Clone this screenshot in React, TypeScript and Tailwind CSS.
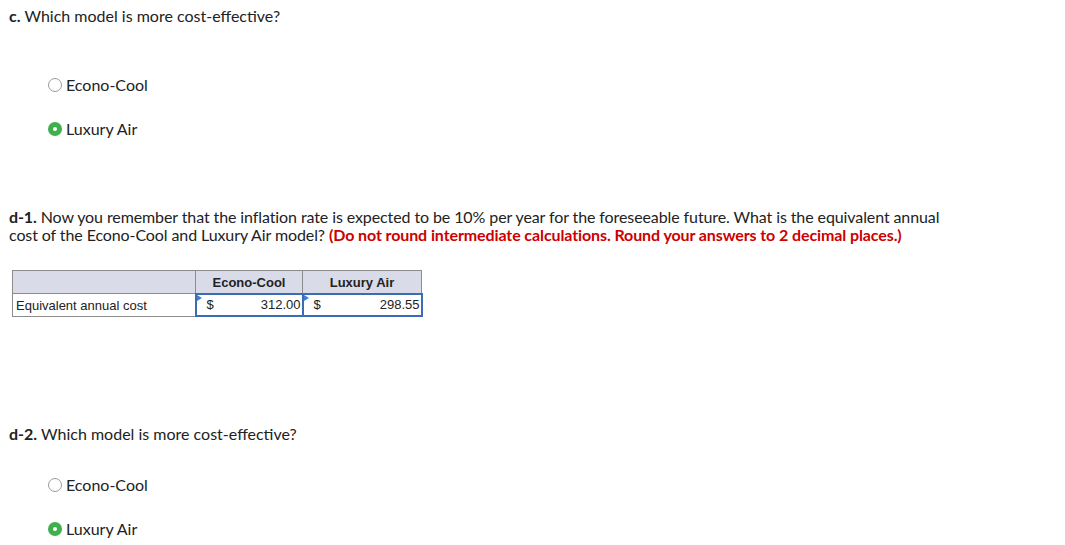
import React from "react";

function Radio({ label, checked }: { label: string; checked?: boolean }) {
  return (
    <div className="flex items-center h-[20px]">
      {checked ? (
        <span className="w-[14px] h-[14px] rounded-full bg-[#3fb04b] flex items-center justify-center">
          <span className="w-[4px] h-[4px] rounded-full bg-white" />
        </span>
      ) : (
        <span className="w-[14px] h-[14px] rounded-full border border-[#9a9a9a] bg-white" />
      )}
      <span className="ml-[4px]">{label}</span>
    </div>
  );
}

function MoneyCell({ value }: { value: string }) {
  return (
    <td className="relative border-2 border-[#3a6db5] h-[22px] p-0">
      <span className="absolute left-0 top-0 w-0 h-0 border-l-[5px] border-y-[3px] border-l-[#3a7fd8] border-y-transparent" />
      <div className="flex justify-between pl-[10px] pr-[1px]">
        <span>$</span>
        <span>{value}</span>
      </div>
    </td>
  );
}

export default function App() {
  return (
    <div className="w-[1065px] h-[545px] bg-white text-[#222] text-[16px] font-['Lato','Open_Sans',sans-serif] px-[9px] pt-[7px]">
      <p className="leading-[18px]">
        <b>c.</b> Which model is more cost-effective?
      </p>
      <div className="pl-[39px] mt-[50px] flex flex-col gap-[24px]">
        <Radio label="Econo-Cool" />
        <Radio label="Luxury Air" checked />
      </div>

      <p className="leading-[18px] mt-[69px] whitespace-nowrap tracking-[-0.1px]">
        <b>d-1.</b> Now you remember that the inflation rate is expected to be 10% per year for the foreseeable
        future. What is the equivalent annual
        <br />
        cost of the Econo-Cool and Luxury Air model?{" "}
        <b className="text-[#c00]">(Do not round intermediate calculations. Round your answers to 2 decimal places.)</b>
      </p>

      <table className="mt-[26px] ml-[3px] border-collapse font-['Liberation_Sans',Arial,sans-serif] text-[13px] text-[#222]">
        <thead>
          <tr className="bg-[#d9dce8] h-[23px]">
            <th className="w-[183px] border border-[#8c8c8c]" />
            <th className="w-[107px] border border-[#8c8c8c] font-bold pt-[2px]">Econo-Cool</th>
            <th className="w-[119px] border border-[#8c8c8c] font-bold pt-[2px]">Luxury Air</th>
          </tr>
        </thead>
        <tbody>
          <tr>
            <td className="border border-[#8c8c8c] px-[3px] h-[22px] pt-[2px]">Equivalent annual cost</td>
            <MoneyCell value="312.00" />
            <MoneyCell value="298.55" />
          </tr>
        </tbody>
      </table>

      <p className="leading-[18px] mt-[108px]">
        <b>d-2.</b> Which model is more cost-effective?
      </p>
      <div className="pl-[39px] mt-[32px] flex flex-col gap-[24px]">
        <Radio label="Econo-Cool" />
        <Radio label="Luxury Air" checked />
      </div>
    </div>
  );
}
